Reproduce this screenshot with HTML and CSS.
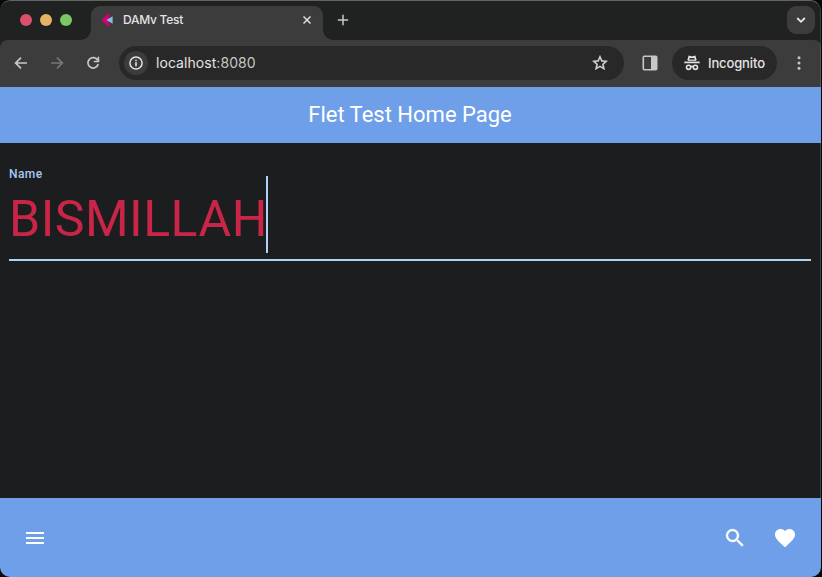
FILE: index.html
```html
<!DOCTYPE html>
<html lang="en">
<head>
<meta charset="utf-8">
<title>DAMv Test</title>
<link rel="stylesheet" href="styles.css">
</head>
<body>
<div class="window">
  <div class="tabstrip">
    <div class="lights"><i class="light red"></i><i class="light amber"></i><i class="light green"></i></div>
    <div class="tab">
      <svg class="favicon" width="14" height="16" viewBox="0 0 14 16"><path d="M.6 8 7 1.2 8.4 2v12L7 14.8z" fill="#cc0374"/><path d="M5.4 8 11.6 4.2v7.6z" fill="#84bfe3"/></svg>
      <span class="tab-title">DAMv Test</span>
      <svg class="tab-close" width="8" height="8" viewBox="0 0 8 8"><path d="M.5.5l7 7M7.5.5l-7 7" stroke="#dedede" stroke-width="1.5"/></svg>
    </div>
    <svg class="new-tab" width="12" height="12" viewBox="0 0 12 12"><path d="M6 .8v10.4M.8 6h10.4" stroke="#c7c8c8" stroke-width="1.5"/></svg>
    <div class="tab-search"><svg width="10" height="8" viewBox="0 0 10 8"><path d="M1.2 2 5 5.8 8.8 2" fill="none" stroke="#e6e6e6" stroke-width="1.8"/></svg></div>
  </div>
  <div class="toolbar">
    <svg class="back" width="14" height="14" viewBox="0 0 14 14"><path d="M13 7H2M7 1.6 1.6 7 7 12.4" fill="none" stroke="#c7c7c7" stroke-width="1.7"/></svg>
    <svg class="forward" width="14" height="14" viewBox="0 0 14 14"><path d="M1 7h11M7 1.6 12.4 7 7 12.4" fill="none" stroke="#777" stroke-width="1.7"/></svg>
    <svg class="reload" width="14" height="14" viewBox="0 0 14 14"><path d="M11.8 4.5A5.2 5.2 0 1 0 12.2 8" fill="none" stroke="#c7c7c7" stroke-width="1.7"/><path d="M12.4.8v4.7H7.8" fill="none" stroke="#c7c7c7" stroke-width="1.7"/></svg>
    <div class="address">
      <div class="info"><svg width="14" height="14" viewBox="0 0 14 14"><circle cx="7" cy="7" r="6.1" fill="none" stroke="#e3e3e3" stroke-width="1.5"/><path d="M7 6.2v4M7 3.7v1.5" stroke="#e3e3e3" stroke-width="1.6"/></svg></div>
      <span class="url">localhost<span class="port">:8080</span></span>
      <svg class="star" width="16" height="16" viewBox="0 0 16 16"><path d="M8 1.8l1.8 4.1 4.5.4-3.4 3 1 4.4L8 11.4l-3.9 2.3 1-4.4-3.4-3 4.5-.4z" fill="none" stroke="#cfcfcf" stroke-width="1.6"/></svg>
    </div>
    <svg class="panel" width="16" height="16" viewBox="0 0 16 16"><rect x="1.3" y="1.3" width="13.4" height="13.4" rx="1" fill="none" stroke="#c7c7c7" stroke-width="1.6"/><path d="M9 1h6v14H9z" fill="#c7c7c7"/></svg>
    <div class="incognito">
      <svg width="16" height="16" viewBox="0 0 16 16"><path d="M.3 7.4h15.4" stroke="#e3e3e3" stroke-width="1.7"/><path d="M4.2 5.2 5.2 1.5l2.8.8 2.8-.8 1 3.7" fill="none" stroke="#e3e3e3" stroke-width="1.7"/><path d="M3.8 4.6h8.4v1.2H3.8z" fill="#e3e3e3"/><g fill="none" stroke="#e3e3e3" stroke-width="1.6"><circle cx="4.6" cy="12.3" r="2.1"/><circle cx="11.4" cy="12.3" r="2.1"/><path d="M6.5 11.8q1.5-.9 3 0"/></g></svg>
      <span>Incognito</span>
    </div>
    <svg class="more" width="4" height="14" viewBox="0 0 4 14" fill="#c7c7c7"><circle cx="2" cy="1.8" r="1.5"/><circle cx="2" cy="7" r="1.5"/><circle cx="2" cy="12.2" r="1.5"/></svg>
  </div>
  <header class="appbar">Flet Test Home Page</header>
  <main class="content">
    <div class="field">
      <div class="label">Name</div>
      <div class="value"><span>BISMILLAH</span><i class="caret"></i></div>
    </div>
  </main>
  <footer class="bottombar">
    <svg width="24" height="24" viewBox="0 0 24 24"><path d="M3 18h18v-2H3v2zm0-5h18v-2H3v2zm0-7v2h18V6H3z" fill="#fff"/></svg>
    <div class="actions">
      <svg width="24" height="24" viewBox="0 0 24 24"><path d="M15.5 14h-.79l-.28-.27A6.47 6.47 0 0 0 16 9.5 6.5 6.5 0 1 0 9.5 16c1.61 0 3.09-.59 4.23-1.57l.27.28v.79l5 4.99L20.49 19l-4.99-5zm-6 0C7.01 14 5 11.99 5 9.5S7.01 5 9.5 5 14 7.01 14 9.5 11.99 14 9.5 14z" fill="#fff" stroke="#fff" stroke-width=".3"/></svg>
      <svg width="24" height="24" viewBox="0 0 24 24"><path d="M12 21.35l-1.45-1.32C5.4 15.36 2 12.28 2 8.5 2 5.42 4.42 3 7.5 3c1.74 0 3.41.81 4.5 2.09C13.09 3.81 14.76 3 16.5 3 19.58 3 22 5.42 22 8.5c0 3.78-3.4 6.86-8.55 11.54L12 21.35z" fill="#fff"/></svg>
    </div>
  </footer>
</div>
</body>
</html>
```
FILE: styles.css
```css
* { box-sizing: border-box; }
html { background: #080808; }
body { margin: 0; width: 822px; height: 577px; overflow: hidden; }
svg { display: block; flex: none; }
.window {
  width: 821px; height: 577px; overflow: hidden;
  display: flex; flex-direction: column;
  border-radius: 10px; background: #1c1d1e;
  font-family: Inter, "Liberation Sans", sans-serif; color: #e3e3e3;
}
.tabstrip {
  height: 48px; flex: none; display: flex; align-items: center;
  margin-bottom: -8px; padding: 0 5px 8px 0;
  background: #202221; border-top: 1px solid #626463; border-right: 1px solid #3c3e3d;
  border-radius: 10px 10px 0 0;
}
.lights { display: flex; gap: 8px; padding: 0 0 1px 20px; width: 91px; }
.light { width: 12px; height: 12px; border-radius: 50%; }
.red { background: #d95068; }
.amber { background: #e5b363; }
.green { background: #7ac763; }
.tab {
  width: 232px; height: 34px; align-self: flex-end; position: relative;
  display: flex; align-items: center; padding: 0 12px 6px 10px;
  background: #3c3c3c; border-radius: 9px 9px 0 0;
}
.tab::before, .tab::after {
  content: ""; position: absolute; bottom: 0; width: 10px; height: 10px;
}
.tab::before { left: -10px; background: radial-gradient(circle at 0 0, transparent 9.5px, #3c3c3c 10px); }
.tab::after { right: -10px; background: radial-gradient(circle at 100% 0, transparent 9.5px, #3c3c3c 10px); }
.tab-title { margin-left: 8px; font-size: 12px; font-weight: 500; line-height: 16px; letter-spacing: -.25px; }
.tab-close { margin-left: auto; }
.new-tab { margin: 0 0 1px 14px; }
.tab-search {
  width: 28px; height: 28px; margin: 0 0 1px auto; border-radius: 9px; background: #3c3c3c;
  display: flex; align-items: center; justify-content: center;
}
.toolbar {
  height: 47px; flex: none; display: flex; align-items: center; position: relative;
  padding: 0 0 1px 14px; background: #3c3c3c; border-right: 1px solid #555;
  border-radius: 8px 8px 0 0;
}
.forward { margin-left: 22px; }
.reload { margin-left: 22px; }
.address {
  width: 505px; height: 34px; margin-left: 19px; padding: 0 16px 0 5px;
  display: flex; align-items: center; border-radius: 17px; background: #282828;
}
.info {
  width: 24px; height: 24px; border-radius: 50%; background: #3c3c3c;
  display: flex; align-items: center; justify-content: center;
}
.url { margin-left: 8px; font-size: 14px; line-height: 20px; letter-spacing: .06px; }
.port { color: #c7c7c7; }
.star { margin-left: auto; }
.panel { margin-left: 18px; }
.incognito {
  width: 105px; height: 34px; margin-left: 14px; padding-left: 12px;
  display: flex; align-items: center; gap: 8px;
  border-radius: 17px; background: #282828; font-size: 13px; font-weight: 500; letter-spacing: -.13px;
}
.more { margin-left: 20px; }
.appbar {
  height: 56px; flex: none; background: #6f9fe8; color: #fff; padding-right: 1px;
  font: 400 22px/56px Roboto, sans-serif; text-align: center;
}
.content { flex: 1; padding: 20px 9px 0; border-right: 1px solid #444; font-family: Roboto, sans-serif; }
.field { height: 98px; padding-top: 3px; border-bottom: 2px solid #afd0f7; }
.label { font-size: 12px; line-height: 16px; font-weight: 500; letter-spacing: .4px; color: #aac7f2; }
.value { display: flex; align-items: center; height: 77px; margin-top: -6px; color: #c92549; font-size: 50px; letter-spacing: .5px; }
.value span { position: relative; top: 4px; }
.caret { width: 2px; height: 77px; margin-left: -2px; background: #afd0f7; }
.bottombar {
  height: 79px; flex: none; display: flex; align-items: center; justify-content: space-between;
  padding: 0 24px 0 23px; background: #6f9fe8;
}
.actions { display: flex; gap: 26px; }
```
